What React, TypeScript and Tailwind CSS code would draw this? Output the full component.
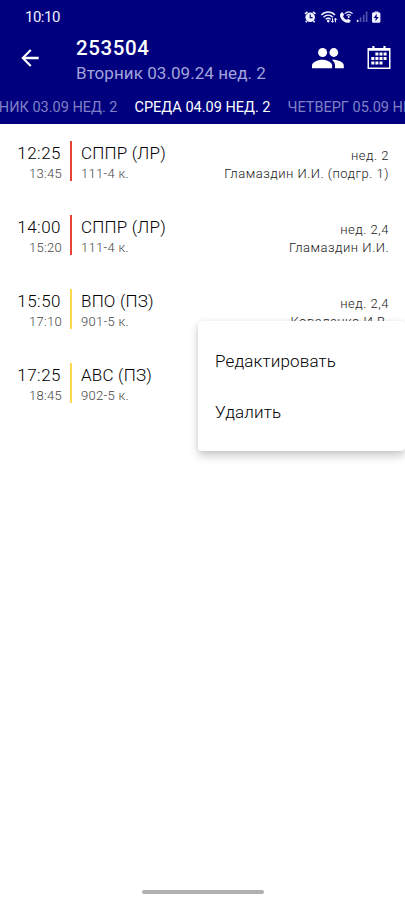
type Lesson = {
  start: string;
  end: string;
  title: string;
  room: string;
  weeks: string;
  teacher: string;
  color: string;
};

const lessons: Lesson[] = [
  { start: "12:25", end: "13:45", title: "СППР (ЛР)", room: "111-4 к.", weeks: "нед. 2", teacher: "Гламаздин И.И. (подгр. 1)", color: "bg-[#e84436]" },
  { start: "14:00", end: "15:20", title: "СППР (ЛР)", room: "111-4 к.", weeks: "нед. 2,4", teacher: "Гламаздин И.И.", color: "bg-[#e84436]" },
  { start: "15:50", end: "17:10", title: "ВПО (ПЗ)", room: "901-5 к.", weeks: "нед. 2,4", teacher: "Коваленко И.В.", color: "bg-[#fbd850]" },
  { start: "17:25", end: "18:45", title: "АВС (ПЗ)", room: "902-5 к.", weeks: "", teacher: "", color: "bg-[#fbd850]" },
];

const StatusIcons = () => (
  <svg width="78" height="14" viewBox="0 0 78 14" fill="none" className="text-[#f0f0ff]">
    {/* alarm */}
    <circle cx="6.2" cy="7.3" r="4.8" fill="currentColor" />
    <path d="M1 3.8 3.4 1.8M11.4 3.8 9 1.8M2.8 11 1.8 12.3M9.6 11l1 1.3" stroke="currentColor" strokeWidth="1.7" />
    <path d="M6.2 4.6v3h2.4" stroke="#00007f" strokeWidth="1.1" />
    {/* wi-fi */}
    <g stroke="currentColor" strokeWidth="1.4">
      <path d="M17.4 5c3.8-4 9.8-4 13.6 0" />
      <path d="M19.5 7.2c2.7-2.8 6.7-2.8 9.4 0" />
      <path d="M21.7 9.3c1.5-1.5 3.6-1.5 5 0" />
    </g>
    <circle cx="24.2" cy="11.1" r="1.3" fill="currentColor" />
    <path d="M28.5 8.2v4M27 10.7l1.5 1.6 1.5-1.6M31.5 12.3v-4M30 9.8l1.5-1.6L33 9.8" stroke="currentColor" strokeWidth="1" />
    {/* wi-fi calling */}
    <path d="M36.4 3.4 38.2 2l2.1 2.8-1.3 1.5c.8 1.7 2 2.8 3.7 3.5l1.6-1.1 2.6 2-1.5 2C40.1 13.5 34.4 7.8 36.4 3.4Z" fill="currentColor" />
    <g stroke="currentColor" strokeWidth="1.2">
      <path d="M40.8 3.6c2.4-2.2 5.4-2.2 7.8 0" />
      <path d="M42.6 5.6c1.4-1.2 2.8-1.2 4.2 0" />
    </g>
    <circle cx="44.7" cy="7.1" r="1" fill="currentColor" />
    {/* signal */}
    <path d="M52.8 9.8h1.6V12h-1.6z" fill="currentColor" />
    <path d="M55.8 7.3h1.6V12h-1.6zM58.9 4.8h1.6V12h-1.6zM61.8 1.5h1.6V12h-1.6z" fill="currentColor" opacity=".35" />
    {/* battery */}
    <rect x="70.6" y="1" width="3.6" height="2" fill="#8080c0" />
    <rect x="68" y="2.3" width="8.4" height="10.4" rx="1.5" fill="currentColor" />
    <path d="M72.8 3.8 69.6 8h2.2l-.5 3.3L74.8 7h-2.2Z" fill="#00007f" />
  </svg>
);

const BackIcon = () => (
  <svg width="26" height="26" viewBox="0 0 24 24" fill="#fff">
    <path d="M20 10.9H7.83l5.59-5.49L12 4l-8 8 8 8 1.41-1.41L7.83 13.1H20z" />
  </svg>
);

const PeopleIcon = () => (
  <svg width="32" height="21" viewBox="0 0 32 21" fill="#fff">
    <circle cx="10.6" cy="4.5" r="4.5" />
    <circle cx="21.8" cy="4.5" r="4.4" />
    <path d="M0 20.2v-2.8c0-3.8 7-5.7 10.3-5.7s9.8 1.9 9.8 5.7v2.8Z" />
    <path d="M19.9 11.7c5.1-.4 11.9 1.9 11.9 5.7v2.8h-8.8v-2.8c0-2.5-1.3-4.3-3.1-5.7Z" />
  </svg>
);

const CalendarIcon = () => (
  <svg width="24" height="24" viewBox="0 0 24 24" fill="#fff">
    <path d="M5.3 0h2.2v2h8.9V0h2.2v2h4.9v21H.5V2h4.8ZM2 4.8v16.7h20V4.8Z" fillRule="evenodd" />
    <path d="M8.4 6.5h3v3h-3zM12.5 6.5h3v3h-3zM16.6 6.5h3v3h-3zM4.3 11h3v3h-3zM8.4 11h3v3h-3zM12.5 11h3v3h-3zM16.6 11h3v3h-3zM4.3 15.5h3v3h-3zM8.4 15.5h3v3h-3zM12.5 15.5h3v3h-3z" />
  </svg>
);

const LessonRow = ({ lesson }: { lesson: Lesson }) => (
  <li className="flex h-[74px] items-start pt-[17px] pr-4">
    <div className="w-[62px] text-right">
      <p className="pt-0.5 pr-px text-[17px] leading-5 tracking-[0.5px] text-black">{lesson.start}</p>
      <p className="pt-px text-[13px] leading-[19px] tracking-[0.3px] text-[#444]">{lesson.end}</p>
    </div>
    <div className={`ml-2 h-10 w-0.5 ${lesson.color}`} />
    <div className="ml-[9px]">
      <p className="pt-0.5 text-[17px] leading-5 tracking-[0.2px] text-black">{lesson.title}</p>
      <p className="pt-px text-[13px] leading-[19px] tracking-[0.3px] text-[#444]">{lesson.room}</p>
    </div>
    <div className="ml-auto pt-[6px] text-right text-[13px] leading-[18px] tracking-[0.5px] text-[#222]">
      <p>{lesson.weeks}</p>
      <p>{lesson.teacher}</p>
    </div>
  </li>
);

export default function App() {
  return (
    <div className="relative flex h-[900px] w-[405px] flex-col overflow-hidden bg-white font-['Roboto','Noto_Sans',sans-serif]">
      <header className="flex h-[124px] shrink-0 flex-col bg-[#00007f]">
        {/* status bar */}
        <div className="flex h-8 items-center justify-between pt-0.5 pr-[23px] pl-[25px]">
          <span className="text-[15px] tracking-[-0.5px] text-[#f0f0ff]">10:10</span>
          <StatusIcons />
        </div>

        {/* toolbar */}
        <div className="flex h-14 items-center pr-3.5 pl-[17px]">
          <div className="pb-1">
            <BackIcon />
          </div>
          <div className="ml-[33px]">
            <h1 className="text-[20.5px] leading-[26px] font-medium tracking-[0.6px] text-white">253504</h1>
            <p className="text-[17px] leading-6 tracking-[0.06px] text-[#a3a3da]">Вторник 03.09.24 нед. 2</p>
          </div>
          <div className="ml-auto flex items-center gap-[23px] pb-1">
            <PeopleIcon />
            <CalendarIcon />
          </div>
        </div>

        {/* day tabs */}
        <div className="flex h-9 items-center justify-center gap-[17px] pt-[3px] text-[14.5px] whitespace-nowrap text-[#8080c4]">
          <span className="flex w-[117px] shrink-0 justify-end">ВТОРНИК 03.09 НЕД. 2</span>
          <span className="shrink-0 text-white">СРЕДА 04.09 НЕД. 2</span>
          <span className="w-[117px] shrink-0">ЧЕТВЕРГ 05.09 НЕД. 2</span>
        </div>
      </header>

      <ul className="font-light">
        {lessons.map((lesson) => (
          <LessonRow key={lesson.start} lesson={lesson} />
        ))}
      </ul>

      {/* context menu */}
      <div className="absolute top-[321px] right-0 flex h-[130px] w-[207px] flex-col rounded bg-white pt-4 pl-[17px] text-[17px] shadow-[0_5px_10px_rgba(0,0,0,0.2),0_0_5px_rgba(0,0,0,0.06)]">
        <button className="flex h-[50px] items-center text-left font-light tracking-[0.15px] text-black">Редактировать</button>
        <button className="flex h-[52px] items-center text-left font-light tracking-[0.15px] text-black">Удалить</button>
      </div>

      <div className="mx-auto mt-auto mb-1.5 h-1 w-[122px] rounded-full bg-[#b0b0b0]" />
    </div>
  );
}
